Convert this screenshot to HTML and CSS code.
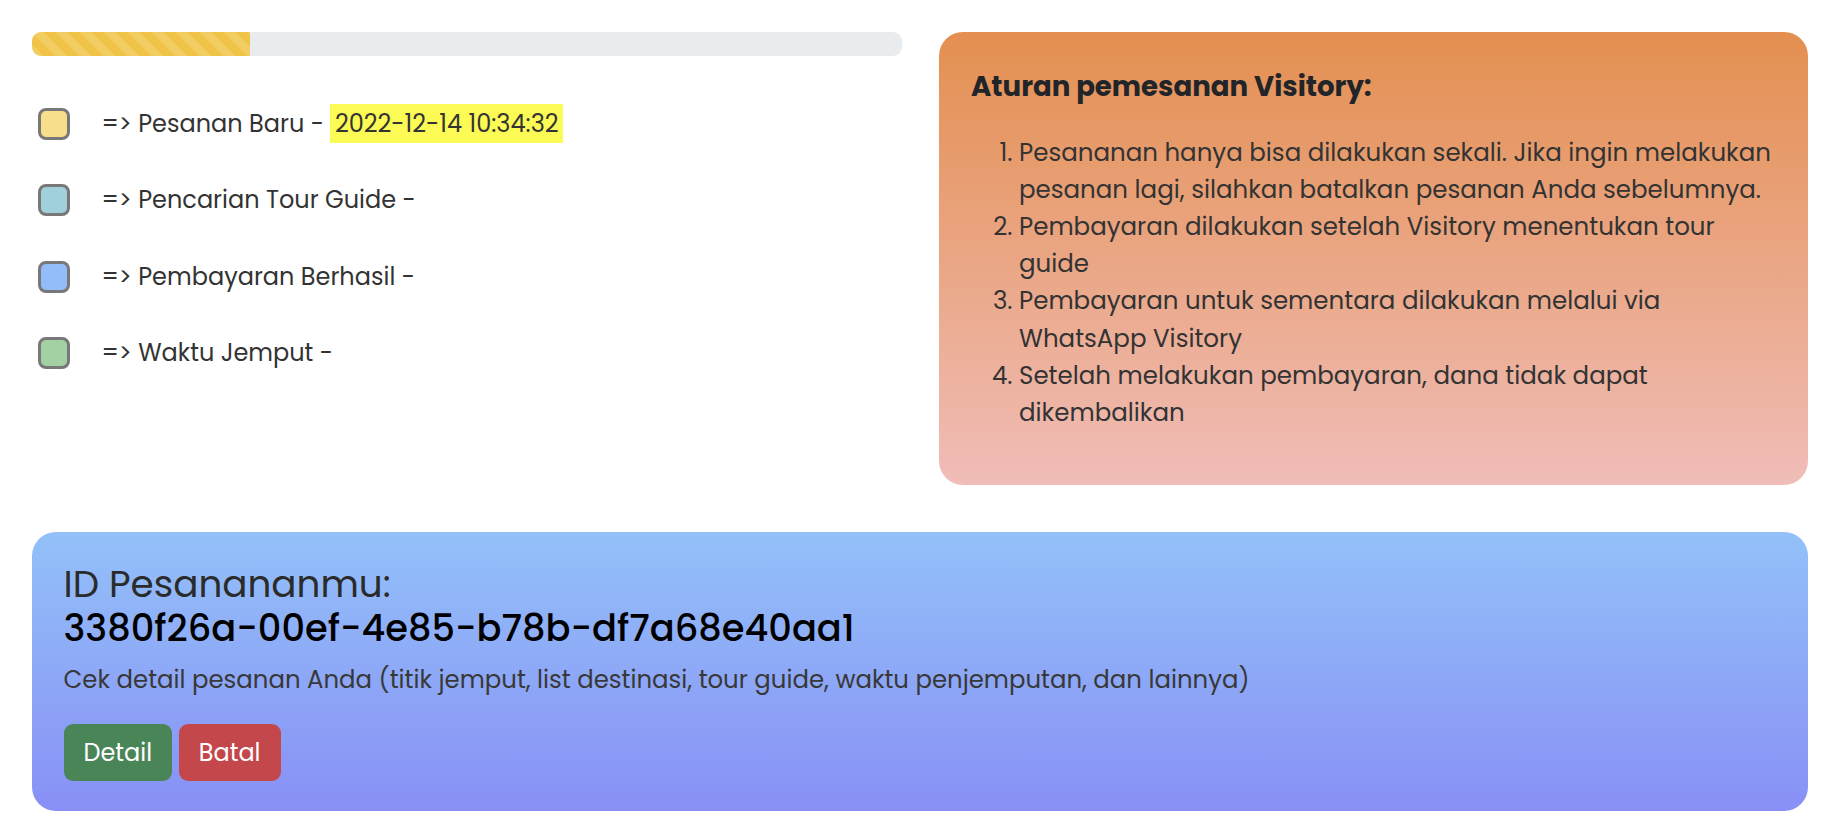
FILE: index.html
```html
<!DOCTYPE html>
<html lang="id">
<head>
<meta charset="utf-8">
<title>Pesanan</title>
<link rel="stylesheet" href="styles.css">
</head>
<body>
<div class="page">
  <div class="top">
    <div class="status">
      <div class="progress"><div class="progress-bar" style="width: 25%"></div></div>
      <ul class="steps">
        <li class="step"><span class="box box-yellow"></span><span class="label">=&gt; Pesanan Baru - <mark class="hl">2022-12-14 10:34:32</mark></span></li>
        <li class="step"><span class="box box-teal"></span><span class="label">=&gt; Pencarian Tour Guide -</span></li>
        <li class="step"><span class="box box-blue"></span><span class="label">=&gt; Pembayaran Berhasil -</span></li>
        <li class="step"><span class="box box-green"></span><span class="label">=&gt; Waktu Jemput -</span></li>
      </ul>
    </div>
    <div class="rules">
      <h5 class="rules-title">Aturan pemesanan Visitory:</h5>
      <ol class="rules-list">
        <li>Pesananan hanya bisa dilakukan sekali. Jika ingin melakukan pesanan lagi, silahkan batalkan pesanan Anda sebelumnya.</li>
        <li>Pembayaran dilakukan setelah Visitory menentukan tour guide</li>
        <li>Pembayaran untuk sementara dilakukan melalui via WhatsApp Visitory</li>
        <li>Setelah melakukan pembayaran, dana tidak dapat dikembalikan</li>
      </ol>
    </div>
  </div>
  <div class="order">
    <h3 class="order-title">ID Pesanananmu:</h3>
    <h3 class="order-id">3380f26a-00ef-4e85-b78b-df7a68e40aa1</h3>
    <p class="order-desc">Cek detail pesanan Anda (titik jemput, list destinasi, tour guide, waktu penjemputan, dan lainnya)</p>
    <div class="actions">
      <button class="btn btn-detail">Detail</button>
      <button class="btn btn-cancel">Batal</button>
    </div>
  </div>
</div>
</body>
</html>
```
FILE: styles.css
```css
* { box-sizing: border-box; }
html, body { margin: 0; padding: 0; background: #fff; }
body {
  font-family: "Poppins", "Open Sans", "DejaVu Sans", sans-serif;
  color: #333;
  font-size: 24px;
}
.page { padding: 32px 24px 30px 32px; }
.top { display: grid; grid-template-columns: 870px 869px; column-gap: 37px; }

.progress {
  height: 24px;
  background: #e9ecef;
  border-radius: 9px;
  overflow: hidden;
  display: flex;
}
.progress-bar {
  background-color: #f0c446;
  background-image: linear-gradient(45deg, rgba(255,255,255,.15) 25%, transparent 25%, transparent 50%, rgba(255,255,255,.15) 50%, rgba(255,255,255,.15) 75%, transparent 75%, transparent);
  background-size: 24px 24px;
}

.steps { list-style: none; margin: 52px 0 0 0; padding: 0 0 0 6px; display: flex; flex-direction: column; gap: 44.3px; }
.step { display: flex; align-items: center; height: 32px; gap: 31.5px; }
.box { width: 32px; height: 32px; border: 3px solid #787878; border-radius: 8px; flex: none; }
.box-yellow { background: #f7de8b; }
.box-teal { background: #a0d0dc; }
.box-blue { background: #93bdf9; }
.box-green { background: #a4d1a4; }
.label { white-space: nowrap; line-height: 36px; }
.hl { background: #fcfa55; color: #333; padding: 3.4px 4.5px; }

.rules {
  border-radius: 24px;
  background: linear-gradient(180deg, #e48f50 0%, #f0bdb8 100%);
  padding: 38px 32px 38px 32px;
  color: #333;
}
.rules-title { margin: 0; font-size: 27.6px; line-height: 33px; font-weight: 700; color: #212529; }
.rules-list { margin: 30.5px 0 16px 0; padding-left: 48px; font-size: 24.5px; line-height: 37.2px; }

.order {
  margin-top: 47px;
  border-radius: 24px;
  background: linear-gradient(180deg, #93c1f9 0%, #8890f5 100%);
  padding: 30px 31.5px 29.5px 31.5px;
}
.order-title { margin: 0; font-size: 37.3px; line-height: 44px; font-weight: 400; color: #2b2b2b; }
.order-id { margin: 0; font-size: 36.8px; line-height: 44px; font-weight: 500; color: #000; }
.order-desc { margin: 12px 0 26px 0; font-size: 24.4px; line-height: 36px; color: #383838; }
.actions { display: flex; gap: 6.6px; }
.btn {
  font-family: inherit;
  font-size: 24px;
  line-height: 36px;
  padding: 9px 20px;
  height: 57px;
  border: 0;
  border-radius: 9px;
  color: #fff;
}
.btn-detail { background: #4a8558; }
.btn-cancel { background: #c4484b; }
```
